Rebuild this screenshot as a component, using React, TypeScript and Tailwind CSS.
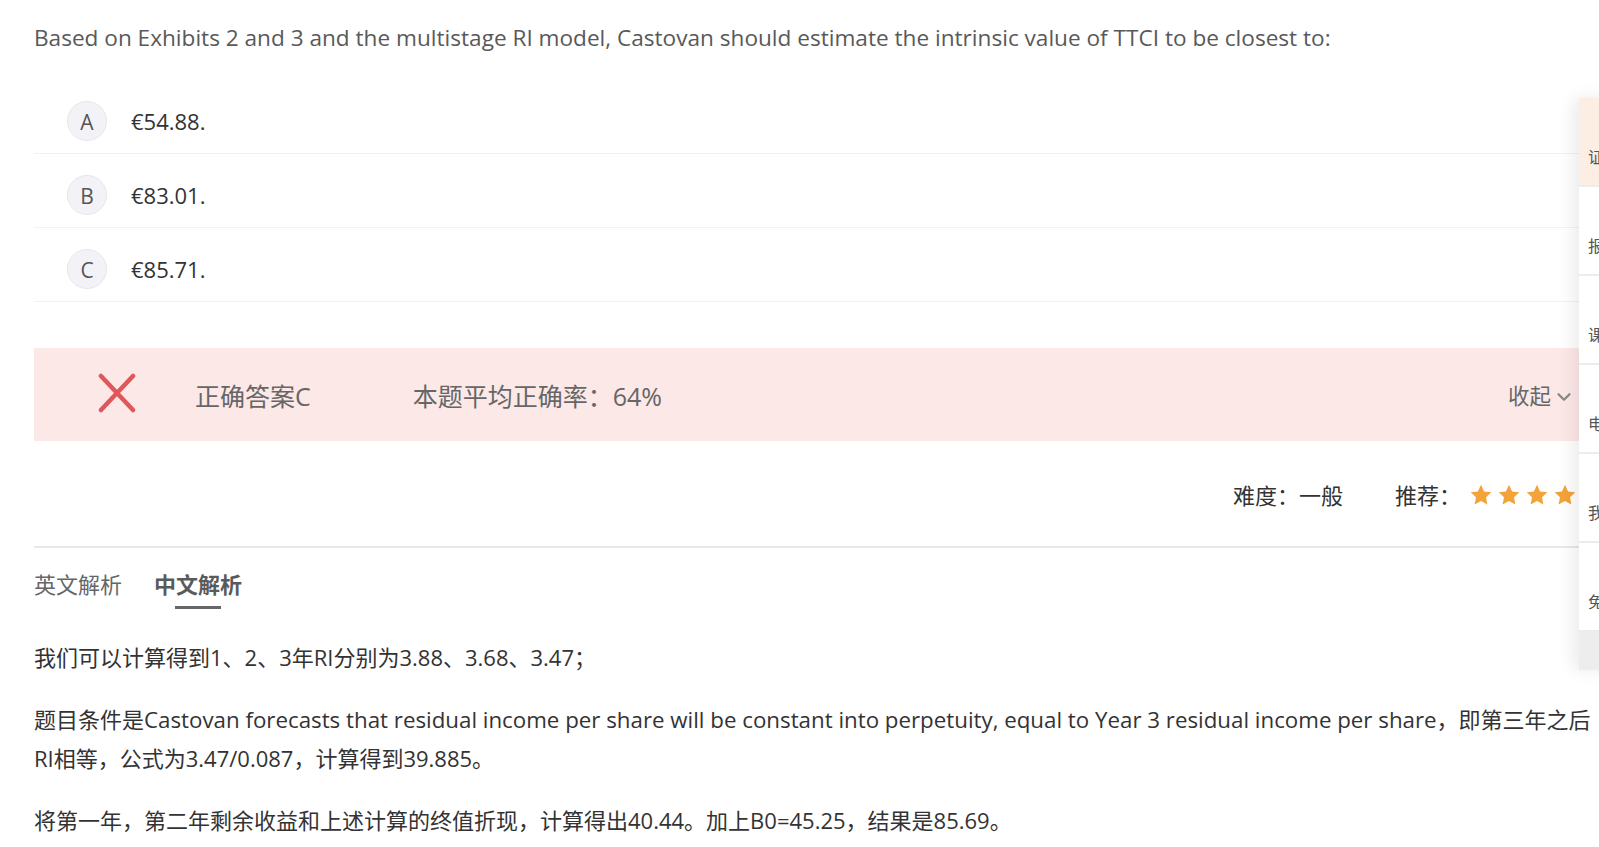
import { ChevronDown } from "lucide-react";

const font = "font-['Open_Sans','Noto_Sans_CJK_SC',sans-serif]";

const options = [
  { key: "A", text: "€54.88." },
  { key: "B", text: "€83.01." },
  { key: "C", text: "€85.71." },
];

const sideItems = ["证书", "报名", "课程", "电话", "我的", "免费"];

function Star() {
  return (
    <svg viewBox="0 0 24 24" className="h-[24px] w-[24px]" fill="#f4a23a">
      <path d="M12 1.8l3.1 6.6 7.2.9-5.3 5 1.4 7.1L12 17.9l-6.4 3.5L7 14.3l-5.3-5 7.2-.9z" />
    </svg>
  );
}

function WrongMark() {
  return (
    <svg viewBox="0 0 40 40" className="mb-[4px] h-[40px] w-[40px]" fill="none" stroke="#e0575b" strokeWidth="4.5" strokeLinecap="round">
      <path d="M4 3 L36 37 M36 3 L4 37" />
    </svg>
  );
}

export default function App() {
  return (
    <div className={`relative h-[847px] w-[1599px] overflow-hidden bg-white ${font}`}>
      <div className="ml-[34px] w-[1571px]">
        {/* Question */}
        <p className="pt-[22px] text-[22.6px] leading-[32px] text-[#595959]">
          Based on Exhibits 2 and 3 and the multistage RI model, Castovan should estimate the intrinsic value of TTCI to be closest to:
        </p>

        {/* Options */}
        <div className="mt-[26px]">
          {options.map((o) => (
            <div key={o.key} className="flex items-center border-b border-[#f2f2f2] pt-[21px] pb-[12px]">
              <div className="ml-[33px] flex h-[40px] w-[40px] items-center justify-center rounded-full border border-[#e6e6ec] bg-[#f3f3f7] pt-[3px] text-[21px] text-[#555]">
                {o.key}
              </div>
              <span className="ml-[24px] text-[22px] text-[#333]">{o.text}</span>
            </div>
          ))}
        </div>

        {/* Result bar */}
        <div className="mt-[46px] flex h-[93px] items-center bg-[#fde8e8] pl-[63px] pr-[30px]">
          <WrongMark />
          <span className="ml-[58px] mt-[4px] text-[25px] text-[#666]">正确答案C</span>
          <span className="ml-[102px] mt-[4px] text-[25px] text-[#666]">本题平均正确率：64%</span>
          <button className="ml-auto mt-[4px] flex items-center gap-[2px] text-[21.5px] text-[#666]">
            收起
            <ChevronDown className="h-[22px] w-[22px] text-[#888]" strokeWidth={2.5} />
          </button>
        </div>

        {/* Difficulty / recommend */}
        <div className="flex h-[107px] items-center justify-end border-b-2 border-[#e8e8e8] pt-[3px] text-[22px] text-[#333]">
          <span>难度：一般</span>
          <span className="ml-[52px]">推荐：</span>
          <div className="ml-[8px] flex gap-[4px]">
            {[0, 1, 2, 3, 4].map((i) => (
              <Star key={i} />
            ))}
          </div>
        </div>

        {/* Tabs */}
        <div className="mt-[22px] flex gap-[32px] text-[22px] leading-[28px]">
          <span className="text-[#666]">英文解析</span>
          <div className="flex flex-col items-center">
            <span className="font-bold text-[#5a5a5a]">中文解析</span>
            <div className="mt-[8px] h-[3px] w-[46px] bg-[#666]" />
          </div>
        </div>

        {/* Analysis */}
        <div className="mt-[29px] text-[22px] leading-[39px] text-[#333]">
          <p>我们可以计算得到1、2、3年RI分别为3.88、3.68、3.47；</p>
          <p className="mt-[23px] whitespace-nowrap">
            题目条件是<span className="text-[22.3px]">Castovan forecasts that residual income per share will be constant into perpetuity, equal to Year 3 residual income per share</span>，即第三年之后
            <br />
            RI相等，公式为3.47/0.087，计算得到39.885。
          </p>
          <p className="mt-[23px]">将第一年，第二年剩余收益和上述计算的终值折现，计算得出40.44。加上B0=45.25，结果是85.69。</p>
        </div>
      </div>

      {/* Floating side panel */}
      <div className="absolute left-[1579px] top-[98px] w-[90px] bg-white shadow-[-6px_0_16px_rgba(0,0,0,0.08)]">
        {sideItems.map((s, i) => (
          <div
            key={s}
            className={`flex h-[89px] items-end border-b-2 border-[#ececec] pb-[16px] pl-[9px] text-[16px] text-[#555] ${i === 0 ? "bg-[#fdeee4]" : ""}`}
          >
            {s}
          </div>
        ))}
        <div className="h-[38px] bg-[#ededed]" />
      </div>
    </div>
  );
}
